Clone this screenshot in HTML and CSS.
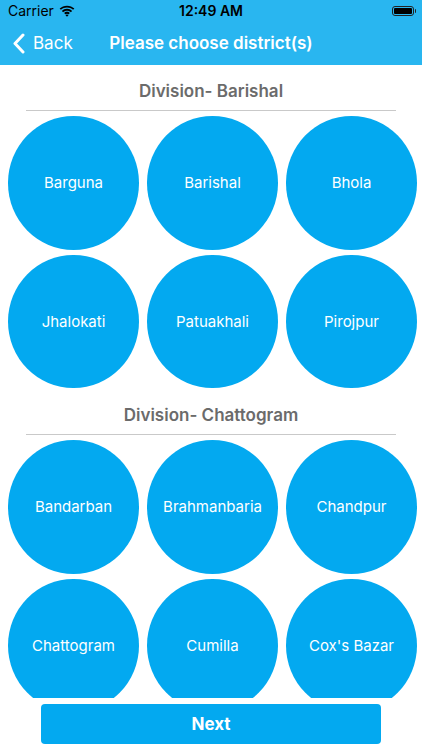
FILE: index.html
```html
<!DOCTYPE html>
<html lang="en">
<head>
  <meta charset="UTF-8">
  <title>Choose District</title>
  <link rel="stylesheet" href="styles.css">
</head>
<body>

  <div class="app">
    <!-- Header -->
    <header class="header">
      <div class="status-bar">
        <div class="carrier">
          Carrier
          <svg class="wifi" width="16" height="12" viewBox="0 0 15 11">
            <path d="M7.5 2.2c2.2 0 4.2.8 5.7 2.2l1.2-1.2C12.6 1.5 10.2.5 7.5.5S2.4 1.5.6 3.2l1.2 1.2C3.3 3 5.3 2.2 7.5 2.2z" fill="#000"/>
            <path d="M7.5 5.2c1.4 0 2.6.5 3.6 1.4l1.2-1.2C11 4.2 9.3 3.5 7.5 3.5S4 4.2 2.7 5.4l1.2 1.2c1-.9 2.2-1.4 3.6-1.4z" fill="#000"/>
            <path d="M7.5 8c.6 0 1.1.2 1.5.6l1.2-1.2C9.5 6.8 8.5 6.3 7.5 6.3s-2 .5-2.7 1.1l1.2 1.2c.4-.4.9-.6 1.5-.6zM7.5 10.8l1.5-1.5c-.4-.4-.9-.6-1.5-.6s-1.1.2-1.5.6z" fill="#000"/>
          </svg>
        </div>
        <div class="clock">12:49 AM</div>
        <div class="battery">
          <span class="battery-body"><span class="battery-level"></span></span>
          <span class="battery-tip"></span>
        </div>
      </div>
      <div class="navbar">
        <a class="back" href="#">
          <svg width="13" height="21" viewBox="0 0 13 21">
            <path d="M11 2L3 10.5L11 19" fill="none" stroke="#fff" stroke-width="3" stroke-linecap="round" stroke-linejoin="round"/>
          </svg>
          <span>Back</span>
        </a>
        <div class="nav-title">Please choose district(s)</div>
      </div>
    </header>

    <!-- District list -->
    <main class="district-list">
      <section class="division">
        <h2 class="division-title">Division- Barishal</h2>
        <div class="district-grid">
          <div class="district">Barguna</div>
          <div class="district">Barishal</div>
          <div class="district">Bhola</div>
          <div class="district">Jhalokati</div>
          <div class="district">Patuakhali</div>
          <div class="district">Pirojpur</div>
        </div>
      </section>

      <section class="division">
        <h2 class="division-title">Division- Chattogram</h2>
        <div class="district-grid">
          <div class="district">Bandarban</div>
          <div class="district">Brahmanbaria</div>
          <div class="district">Chandpur</div>
          <div class="district">Chattogram</div>
          <div class="district">Cumilla</div>
          <div class="district">Cox's Bazar</div>
        </div>
      </section>
    </main>

    <div class="footer">
      <button type="button" class="next-btn">Next</button>
    </div>
  </div>

</body>
</html>
```

FILE: styles.css
```css
body {
  margin: 0;
  font-family: Inter, "Liberation Sans", sans-serif;
  background: #fff;
}

.app {
  width: 422px;
  height: 750px;
  display: flex;
  flex-direction: column;
  overflow: hidden;
}

.header {
  background: #29b6f0;
  color: #fff;
  height: 65px;
  flex-shrink: 0;
}

.status-bar {
  height: 21px;
  display: flex;
  align-items: center;
  justify-content: space-between;
  padding: 0 6px 0 8px;
  color: #000;
  font-size: 14px;
  position: relative;
}

.carrier {
  display: flex;
  align-items: center;
  gap: 5px;
}

.clock {
  position: absolute;
  left: 0;
  right: 0;
  text-align: center;
  font-weight: 600;
  font-size: 14px;
}

.battery {
  display: flex;
  align-items: center;
  gap: 1px;
}

.battery-body {
  width: 22px;
  height: 10px;
  border: 1px solid #222;
  border-radius: 3px;
  padding: 1px;
  box-sizing: border-box;
  display: flex;
}

.battery-level {
  flex: 1;
  background: #000;
  border-radius: 1px;
}

.battery-tip {
  width: 1.5px;
  height: 4px;
  background: #222;
  border-radius: 0 1px 1px 0;
}

.navbar {
  height: 44px;
  display: flex;
  align-items: center;
  position: relative;
}

.back {
  display: flex;
  align-items: center;
  gap: 8px;
  padding-left: 12px;
  color: #fff;
  text-decoration: none;
  font-size: 17px;
}

.nav-title {
  position: absolute;
  left: 0;
  right: 0;
  text-align: center;
  font-size: 17px;
  font-weight: 600;
  pointer-events: none;
}

.district-list {
  height: 633px;
  overflow: hidden;
  flex-shrink: 0;
}

.division {
  padding-top: 16px;
}

.division + .division {
  padding-top: 17px;
}

.division-title {
  margin: 0 26px;
  padding-bottom: 9px;
  border-bottom: 1px solid #c9c9c9;
  text-align: center;
  font-size: 17px;
  line-height: 20px;
  font-weight: 600;
  color: #6b6b6b;
}

.district-grid {
  display: grid;
  grid-template-columns: repeat(3, 131px);
  grid-auto-rows: 133.5px;
  column-gap: 8px;
  row-gap: 5px;
  padding: 5px 0 0 8px;
}

.district {
  background: #03a9f0;
  border-radius: 50%;
  color: #fff;
  font-size: 15px;
  display: flex;
  align-items: center;
  justify-content: center;
}

.footer {
  flex: 1;
  padding: 6px 41px 0;
}

.next-btn {
  width: 100%;
  height: 40px;
  border: none;
  border-radius: 4px;
  background: #03a9f0;
  color: #fff;
  font-family: inherit;
  font-size: 17px;
  font-weight: 700;
}
```
